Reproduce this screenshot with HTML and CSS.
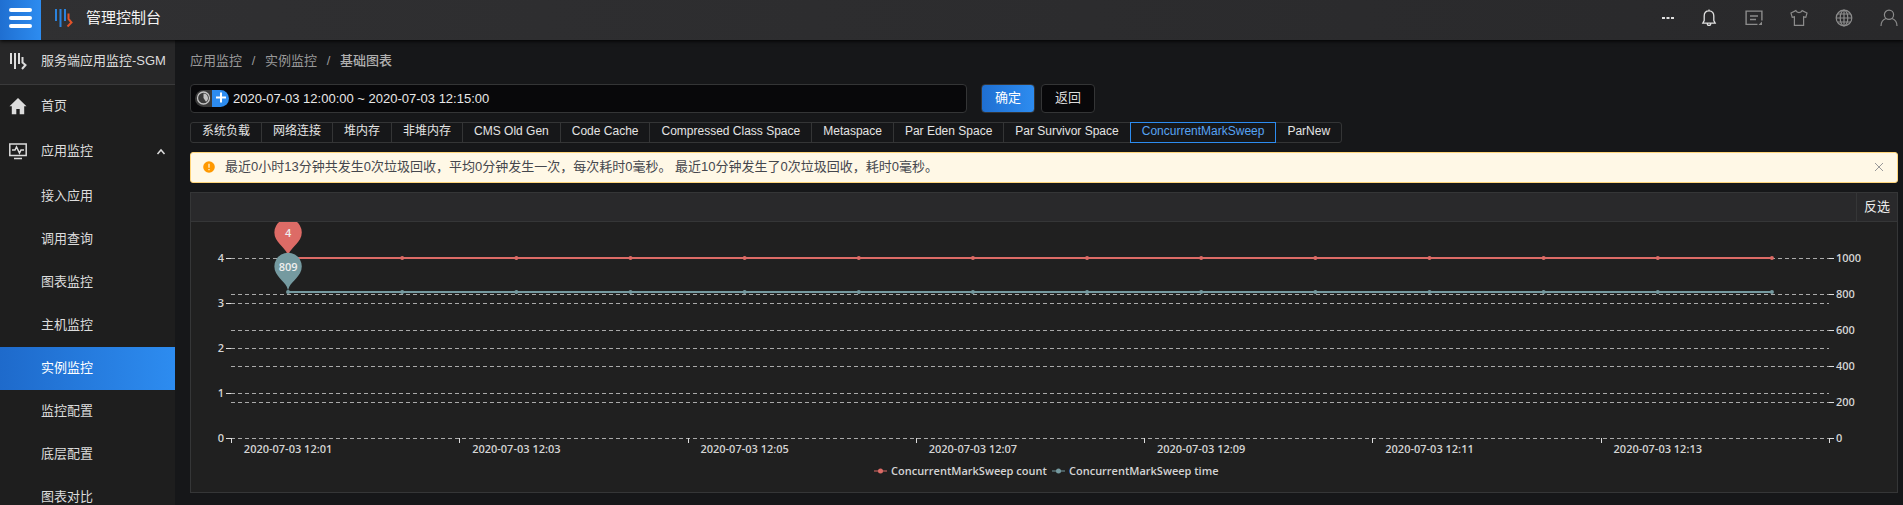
FILE: index.html
```html
<!DOCTYPE html>
<html lang="zh-CN">
<head>
<meta charset="utf-8">
<title>管理控制台</title>
<link rel="stylesheet" href="styles.css">
</head>
<body>
<header class="topbar">
  <button class="menu-toggle" type="button" aria-label="菜单"><span></span><span></span><span></span></button>
  <svg class="brand" viewBox="0 0 18 18" width="18" height="18" fill="none" stroke-width="2">
    <path stroke="#2b82dc" d="M1 0v12M5.500 0v18M10 0v12"/>
    <path stroke="#e2532a" d="M13.500 4.500v5.500l3 3.500l-4 4"/>
  </svg>
  <h1 class="topbar-title">管理控制台</h1>
  <nav class="tools" aria-label="工具">
    <button type="button" class="tool bright dots" aria-label="更多"><svg viewBox="0 0 18 18" width="18" height="18" fill="currentColor"><rect x="3" y="8" width="3" height="2"/><rect x="7.500" y="8" width="3" height="2"/><rect x="12" y="8" width="3" height="2"/></svg></button>
    <button type="button" class="tool bright" aria-label="通知"><svg viewBox="0 0 18 18" width="18" height="18" fill="none" stroke="currentColor" stroke-width="1.300"><path d="M9 1.800c-3.400 0-4.800 2.600-4.800 5.200v4.500l-1.400 2.700h12.400l-1.400-2.700v-4.500c0-2.600-1.400-5.200-4.800-5.200zM9 .5v1.500M7.300 14.500c0 2.600 3.400 2.600 3.400 0"/></svg></button>
    <button type="button" class="tool" aria-label="文档"><svg viewBox="0 0 18 18" width="18" height="18" fill="none" stroke="currentColor" stroke-width="1.400"><path d="M12.500 15.400h-11.400v-13.300h15.800v9.500M5 7h8M5 10.500h6"/><path fill="currentColor" stroke="none" d="M17 12.500v3.500h-3.500z"/></svg></button>
    <button type="button" class="tool" aria-label="主题"><svg viewBox="0 0 18 18" width="18" height="18" fill="none" stroke="currentColor" stroke-width="1.200"><path d="M5.800 1.600l-4.800 2.400l1.200 4.300l2.200-.5v8.600h9.200v-8.600l2.200.5l1.200-4.300l-4.800-2.400c-1.200 2.700-5.200 2.700-6.400 0z"/></svg></button>
    <button type="button" class="tool" aria-label="语言"><svg viewBox="0 0 18 18" width="18" height="18" fill="none" stroke="currentColor" stroke-width="1.200"><circle cx="9" cy="9" r="7.800"/><ellipse cx="9" cy="9" rx="3.800" ry="7.800"/><path d="M9 1v16M1 9h16M2.300 5h13.400M2.300 13h13.400"/></svg></button>
    <button type="button" class="tool" aria-label="用户"><svg viewBox="0 0 18 18" width="18" height="18" fill="none" stroke="currentColor" stroke-width="1.200"><circle cx="9" cy="5.800" r="4.600"/><path d="M1 17c0-4.500 2-6.500 5-7.500M17 17c0-4.500-2-6.500-5-7.500"/></svg></button>
  </nav>
</header>
<div class="shell">
  <aside class="sidebar">
    <div class="product">
      <svg viewBox="0 0 18 18" width="18" height="18" fill="none" stroke="currentColor" stroke-width="2"><path d="M2 1v11M6 1v16M10 1v11M13.500 5v5.500l3 2.500l-3.500 4"/></svg>
      <span>服务端应用监控-SGM</span>
    </div>
    <nav aria-label="主菜单">
      <a class="item" href="#">
        <svg viewBox="0 0 18 18" width="18" height="18" fill="currentColor"><path d="M9 1l-8.500 8.200h2.300v8h4.500v-5.200h3.400v5.200h4.500v-8h2.300z"/></svg>
        <span>首页</span>
      </a>
      <a class="item" href="#">
        <svg viewBox="0 0 18 18" width="18" height="18" fill="none" stroke="currentColor" stroke-width="1.500"><path d="M.8 2h16.400v11.500h-16.400zM5 16.500h8M3 8h3l1.500-3l3 6l1.500-3h3"/></svg>
        <span>应用监控</span>
        <svg class="caret" viewBox="0 0 10 10" width="10" height="10" fill="none" stroke="currentColor" stroke-width="1.500"><path d="M1.500 8l3.500-4l3.500 4"/></svg>
      </a>
      <a class="sub" href="#">接入应用</a>
      <a class="sub" href="#">调用查询</a>
      <a class="sub" href="#">图表监控</a>
      <a class="sub" href="#">主机监控</a>
      <a class="sub active" href="#" aria-current="page">实例监控</a>
      <a class="sub" href="#">监控配置</a>
      <a class="sub" href="#">底层配置</a>
      <a class="sub" href="#">图表对比</a>
    </nav>
  </aside>
  <main class="main">
    <nav class="crumbs" aria-label="路径">
      <a href="#">应用监控</a><span>/</span><a href="#">实例监控</a><span>/</span><b>基础图表</b>
    </nav>
    <form class="query">
      <div class="range">
        <svg viewBox="0 0 34 17" width="34" height="17" fill="none"><path fill="#3a3a3a" d="M17 0h-8.500a8.500 8.500 0 0 0 0 17h8.500z"/><path fill="#2d8cf0" d="M17 0h8.500a8.500 8.500 0 0 1 0 17h-8.500z"/><circle cx="8.500" cy="8" r="6" stroke="#c4c4c4" stroke-width="1.300"/><path fill="#c4c4c4" d="M8.500 3.500a4.500 4.500 0 0 1 2.500 8.200l-2.500-3.700z"/><path stroke="#fff" stroke-width="2" d="M26 2.500v10M21 7.500h10"/></svg>
        <input type="text" aria-label="时间范围" value="2020-07-03 12:00:00 ~ 2020-07-03 12:15:00">
      </div>
      <button class="btn primary" type="button">确定</button>
      <button class="btn" type="button">返回</button>
    </form>
    <div class="tabs" role="tablist">
      <button type="button" role="tab">系统负载</button>
      <button type="button" role="tab">网络连接</button>
      <button type="button" role="tab">堆内存</button>
      <button type="button" role="tab">非堆内存</button>
      <button type="button" role="tab">CMS Old Gen</button>
      <button type="button" role="tab">Code Cache</button>
      <button type="button" role="tab">Compressed Class Space</button>
      <button type="button" role="tab">Metaspace</button>
      <button type="button" role="tab">Par Eden Space</button>
      <button type="button" role="tab">Par Survivor Space</button>
      <button type="button" role="tab" aria-selected="true" class="selected">ConcurrentMarkSweep</button>
      <button type="button" role="tab">ParNew</button>
    </div>
    <div class="alert" role="alert">
      <svg viewBox="0 0 12 12" width="12" height="12"><circle cx="6" cy="6" r="5.800" fill="#ff9900"/><path fill="none" stroke="#fff8e6" stroke-width="1.200" d="M6 2.800v4M6 8v1.300"/></svg>
      <p>最近0小时13分钟共发生0次垃圾回收，平均0分钟发生一次，每次耗时0毫秒。 最近10分钟发生了0次垃圾回收，耗时0毫秒。</p>
      <button type="button" class="close" aria-label="关闭"><svg viewBox="0 0 10 10" width="10" height="10" fill="none" stroke="currentColor"><path d="M1 1l8 8M9 1l-8 8"/></svg></button>
    </div>
    <section class="panel">
      <div class="panel-head"><button type="button">反选</button></div>
      <div class="chart" id="chart"></div>
    </section>
  </main>
</div>
<script src="chart.js"></script>
</body>
</html>
```
FILE: styles.css
```css
* { box-sizing: border-box; }
html, body { height: 100%; }
body {
  margin: 0;
  display: flex;
  flex-direction: column;
  overflow: hidden;
  background: #161719;
  color: #dcdcdc;
  font: 13px/20px "Liberation Sans", "Noto Sans CJK SC", sans-serif;
}
button, input { font: inherit; color: inherit; }
button { padding: 0; border: 0; background: none; cursor: pointer; }
a { color: inherit; text-decoration: none; }
svg { display: block; flex: none; }

.topbar {
  position: relative;
  display: flex;
  align-items: center;
  flex: none;
  height: 40px;
  padding-bottom: 4px;
  background: linear-gradient(90deg, #303032, #29292b);
  box-shadow: 0 1px 4px #000;
}
.menu-toggle {
  display: flex;
  flex-direction: column;
  align-items: center;
  align-self: flex-start;
  gap: 4px;
  flex: none;
  width: 41px;
  height: 40px;
  padding-top: 8px;
  background: linear-gradient(90deg, #1f6fd1, #2d8cf0);
}
.menu-toggle span { width: 23px; height: 4px; border-radius: 2px; background: #fff; }
.brand { margin: 0 13px 0 14px; }
.topbar-title { margin: 0; font-size: 15px; font-weight: 400; color: #f4f4f4; }
.tools { display: flex; gap: 27px; margin: 0 5px 0 auto; }
.tool { color: #8c8c8c; }
.tool.bright { color: #e0e0e0; }
.dots { margin-right: -4px; }

.shell { display: flex; flex: 1; min-height: 0; }
.sidebar { width: 175px; flex: none; overflow: hidden; background: #1e1e1e; }
.product, .item {
  display: flex;
  align-items: center;
  gap: 14px;
  height: 45px;
  padding: 0 9px 3px;
  white-space: nowrap;
}
.product { background: #272728; border-bottom: 1px solid #3a3a3b; }
.caret { margin-left: auto; }
.sub { display: block; height: 43px; padding-left: 41px; line-height: 42px; }
.sub.active { background: linear-gradient(90deg, #1e6acb, #2d8cf0); color: #fff; }

.main { flex: 1; min-width: 0; padding: 11px 5px 12px 15px; }
.crumbs { display: flex; color: #999; }
.crumbs span { width: 23px; text-align: center; }
.crumbs b { font-weight: 500; color: #b0b0b0; }
.query { display: flex; gap: 6px; margin-top: 13px; }
.range {
  display: flex;
  align-items: center;
  width: calc(50% - 77px);
  height: 29px;
  margin-right: 8px;
  padding-left: 4px;
  border: 1px solid #343536;
  border-radius: 4px;
  background: #08080a;
}
.range input { flex: 1; min-width: 0; padding: 0 4px; border: 0; background: none; color: #e8e8e8; outline: 0; }
.btn { width: 54px; height: 29px; padding-bottom: 1px; border: 1px solid #343536; border-radius: 4px; background: #08080a; }
.btn.primary { background: linear-gradient(90deg, #1f6fd1, #2d8cf0); color: #fff; }

.tabs { display: flex; margin-top: 9px; }
.tabs button {
  height: 21px;
  margin-right: -1px;
  padding: 0 11px 2px;
  border: 1px solid #343536;
  font-size: 12px;
  line-height: 17px;
  white-space: nowrap;
  color: #e4e4e4;
}
.tabs button:first-child { border-radius: 3px 0 0 3px; }
.tabs button:last-child { border-radius: 0 3px 3px 0; }
.tabs .selected { position: relative; border-color: #2d8cf0; color: #57a3f3; }

.alert {
  display: flex;
  align-items: center;
  gap: 10px;
  height: 31px;
  margin-top: 9px;
  padding: 0 13px 1px 12px;
  border: 1px solid #ffd57a;
  border-radius: 3px;
  background: #fff8e6;
  color: #45474d;
}
.alert p { flex: 1; margin: 0; }
.close { color: #999; }

.panel { margin-top: 9px; border: 1px solid #353637; background: #202020; }
.panel-head { display: flex; justify-content: flex-end; height: 29px; background: #29292b; border-bottom: 1px solid #353637; }
.panel-head button { width: 41px; padding-bottom: 1px; border-left: 1px solid #353637; color: #eee; }
.chart { height: 270px; }
.chart svg { width: 100%; height: 100%; overflow: hidden; }
.chart text { font: 600 11px "Open Sans", "Noto Sans", sans-serif; fill: #d4d4d4; }
.chart .end { text-anchor: end; }
.chart .mid { text-anchor: middle; }
.chart .pin-text { fill: #eee; }
.grid { stroke: #aaa; stroke-dasharray: 4 3; }
.tick { stroke: #ddd; }
```
FILE: chart.js
```js
const categories = Array.from({ length: 14 }, (_, i) => '2020-07-03 12:' + String(i + 1).padStart(2, '0'));
const series = [
  { name: 'ConcurrentMarkSweep count', value: 4, max: 4, color: '#dd6b66' },
  { name: 'ConcurrentMarkSweep time', value: 809, max: 1000, color: '#759aa0' }
];
const box = document.getElementById('chart');

function draw() {
  const width = box.clientWidth;
  const left = 40, right = width - 68, top = 36, bottom = 216;
  const step = (right - left) / categories.length;
  const yOf = (v, max) => Math.round(bottom - v / max * (bottom - top));
  const line = (x1, y1, x2, y2, cls) => `<path class="${cls}" d="M${x1} ${y1}L${x2} ${y2}"/>`;
  const text = (x, y, value, cls) => `<text class="${cls}" x="${x}" y="${y}">${value}</text>`;
  let out = '';

  for (let v = 0; v <= 4; v++) {
    const y = yOf(v, 4) + 0.5;
    if (v % 4) out += line(left, y, right, y, 'grid');
    out += line(left - 5, y, left, y, 'tick') + text(left - 7, y + 3, v, 'end');
  }
  for (let v = 0; v <= 1000; v += 200) {
    const y = yOf(v, 1000) + 0.5;
    out += line(left, y, right, y, 'grid') + line(right, y, right + 5, y, 'tick') + text(right + 7, y + 3, v, '');
  }
  for (let i = 0; i <= categories.length; i += 2) {
    const x = Math.round(left + i * step) + 0.5;
    out += line(x, bottom, x, bottom + 5, 'tick');
    if (categories[i]) out += text(left + (i + 0.5) * step, bottom + 15, categories[i], 'mid');
  }
  series.forEach(s => {
    const y = yOf(s.value, s.max);
    const xs = categories.map((_, i) => left + (i + 0.5) * step);
    out += `<path d="M${xs[0]} ${y}L${xs[xs.length - 1]} ${y}" stroke="${s.color}" stroke-width="2"/>`;
    out += xs.map(x => `<circle cx="${x}" cy="${y}" r="2" fill="${s.color}"/>`).join('');
  });
  series.forEach(s => {
    const y = yOf(s.value, s.max), x = left + step / 2;
    out += `<path fill="${s.color}" transform="translate(${x} ${y})" d="M0 0C0 -8 -7.500 -11 -12 -19A13.700 13.700 0 1 1 12 -19C7.500 -11 0 -8 0 0z"/>`;
    out += text(x, y - 21, s.value, 'mid pin-text');
  });
  let x = width / 2 - 170;
  series.forEach(s => {
    out += `<path d="M${x} 249h13" stroke="${s.color}"/><circle cx="${x + 6.5}" cy="249" r="2.500" fill="${s.color}"/>`;
    out += text(x + 17, 253, s.name, '');
    x += 178;
  });
  box.innerHTML = `<svg role="img" aria-label="ConcurrentMarkSweep">${out}</svg>`;
}

draw();
window.addEventListener('resize', draw);
```
